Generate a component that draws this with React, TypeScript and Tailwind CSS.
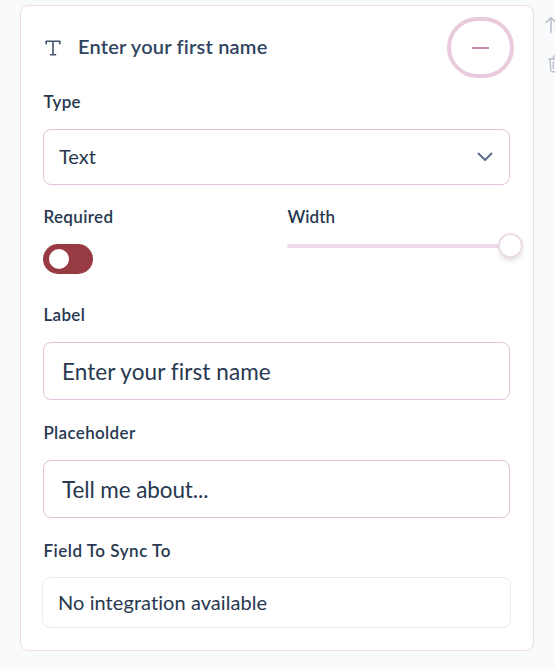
import React from 'react';

interface TextFieldProps {
    label: string;
    value: string;
    inputClass: string;
}

const FieldLabel: React.FC<{ children: React.ReactNode; className?: string }> = ({ children, className = 'tracking-[0.35px]' }) => (
    <span className={`block h-6 pl-[0.4px] text-[17px] leading-6 font-semibold ${className}`}>{children}</span>
);

const TextField: React.FC<TextFieldProps> = ({ label, value, inputClass }) => {
    return (
        <label className="block mb-[21px]">
            <FieldLabel>{label}</FieldLabel>
            <input
                type="text"
                defaultValue={value}
                className={`mt-[15px] block w-full h-[58px] px-[18px] text-[22.5px] border border-[#e3c1dc] rounded-lg bg-white outline-none ${inputClass}`}
            />
        </label>
    );
};

const App: React.FC = () => {
    return (
        <div className="flex h-[669px] w-full overflow-hidden bg-[#f8fafc] pt-[5px] pl-5 font-['Lato',sans-serif] [font-variant-ligatures:none] text-[#27384f]">
            <section className="h-[646px] w-[514px] shrink-0 rounded-lg border border-[#efdae6] bg-white pt-[11px] pr-[23px] pl-[22px]">
                <header className="-mr-1 flex h-[61px] items-center">
                    <svg className="ml-0.5 h-4 w-4" viewBox="0 0 16 16" fill="none" stroke="#42536b" strokeWidth="1.6" strokeLinecap="round" strokeLinejoin="round">
                        <path d="M1.2 3.8V1.2h13.6v2.6M8 1.2v13.6M5.4 14.8h5.2" />
                    </svg>
                    <h2 className="ml-[17px] flex-1 pb-[3px] text-xl font-semibold tracking-[0.2px] text-[#30445f]">Enter your first name</h2>
                    <button className="flex h-[61px] w-[67px] items-center justify-center rounded-full border-4 border-[#e9cbdd]">
                        <span className="h-0.5 w-[17px] bg-[#c588ab]" />
                    </button>
                </header>

                <div className="mt-[12px]">
                    <FieldLabel>Type</FieldLabel>
                    <button className="mt-[15px] flex h-14 w-full items-center justify-between rounded-lg border border-[#e3c1dc] pr-4 pb-0.5 pl-[15px] text-xl">
                        Text
                        <svg className="h-[9px] w-4" viewBox="0 0 16 9" fill="none" stroke="#5b6c89" strokeWidth="2">
                            <path d="M1 1l7 7 7-7" />
                        </svg>
                    </button>
                </div>

                <div className="mt-5 flex h-[98px]">
                    <div className="w-[244px]">
                        <FieldLabel>Required</FieldLabel>
                        <button className="mt-[15px] flex h-[30px] w-[50px] items-center rounded-full bg-[#983a42] pl-1.5">
                            <span className="size-5 rounded-full bg-white" />
                        </button>
                    </div>
                    <div className="flex-1">
                        <FieldLabel className="tracking-[0.1px]">Width</FieldLabel>
                        <div className="mt-1 -mr-[13px] flex h-[25px] items-center">
                            <span className="-mr-0.5 h-1 flex-1 rounded-l-full bg-[#eedce8]" />
                            <span className="size-[25px] rounded-full border-[2.5px] border-[#eedce8] bg-white shadow-md" />
                        </div>
                    </div>
                </div>

                <TextField label="Label" value="Enter your first name" inputClass="tracking-[0.08px]" />
                <TextField label="Placeholder" value="Tell me about..." inputClass="tracking-[-0.1px]" />

                <FieldLabel className="tracking-[0.52px]">Field To Sync To</FieldLabel>
                <div className="-mx-px mt-[14px] flex h-[51px] items-center rounded-lg border border-[#ebe9ed] px-[15px] pb-0.5 text-xl tracking-[0.07px]">
                    No integration available
                </div>
            </section>

            <aside className="mt-[11px] ml-[11px] flex shrink-0 flex-col gap-[21px]">
                <svg className="h-[18px] w-6" viewBox="0 0 24 18" fill="none" stroke="#babfca" strokeWidth="1.5" strokeLinecap="round" strokeLinejoin="round">
                    <path d="M1.2 6.4L6 1.8l4.8 4.6M6 1.8v14.6M10.2 11.8l4.8 4.6 4.8-4.6M15 16.4V1.8" />
                </svg>
                <svg className="ml-[3px] h-[18px] w-4" viewBox="0 0 16 18" fill="none" stroke="#babfca" strokeWidth="1.4" strokeLinecap="round" strokeLinejoin="round">
                    <path d="M.8 4h14.4M2 4l.7 11.2a1.6 1.6 0 001.6 1.5h7.4a1.6 1.6 0 001.6-1.5L14 4M4.4 4l1.2-2.3a1.3 1.3 0 011.1-.7h2.6a1.3 1.3 0 011.1.7L11.6 4M5.3 6.6v7M8 6.6v7M10.7 6.6v7" />
                </svg>
            </aside>
        </div>
    );
};

export default App;
